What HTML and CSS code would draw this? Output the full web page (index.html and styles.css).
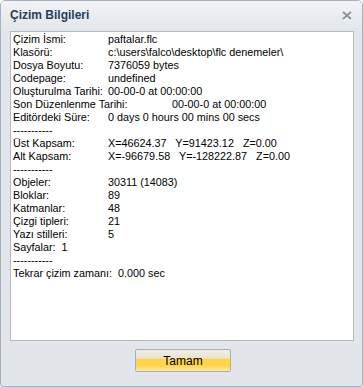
FILE: index.html
```html
<!DOCTYPE html>
<html>
<head>
<meta charset="utf-8">
<link rel="stylesheet" href="styles.css">
</head>
<body>
<div class="window">
  <div class="titlebar">
    <span class="title">Çizim Bilgileri</span>
    <svg class="close" width="11" height="10" viewBox="0 0 11 10">
      <path d="M1 1 L9 8 M9 1 L1 8" stroke="#ffffff" stroke-width="2" transform="translate(0.5,1)" opacity="0.8"/>
      <path d="M1 1 L9 8 M9 1 L1 8" stroke="#8893a1" stroke-width="2"/>
    </svg>
  </div>
  <div class="content">
    <div class="info">
      <div class="row"><span class="k">Çizim İsmi:</span><span class="v">paftalar.flc</span></div>
      <div class="row"><span class="k">Klasörü:</span><span class="v">c:\users\falco\desktop\flc denemeler\</span></div>
      <div class="row"><span class="k">Dosya Boyutu:</span><span class="v">7376059 bytes</span></div>
      <div class="row"><span class="k">Codepage:</span><span class="v">undefined</span></div>
      <div class="row"><span class="k">Oluşturulma Tarihi:</span><span class="v">00-00-0 at 00:00:00</span></div>
      <div class="row wide"><span class="k">Son Düzenlenme Tarihi:</span><span class="v">00-00-0 at 00:00:00</span></div>
      <div class="row"><span class="k">Editördeki Süre:</span><span class="v">0 days 0 hours 00 mins 00 secs</span></div>
      <div class="line">-----------</div>
      <div class="row"><span class="k">Üst Kapsam:</span><span class="v">X=46624.37   Y=91423.12   Z=0.00</span></div>
      <div class="row"><span class="k">Alt Kapsam:</span><span class="v">X=-96679.58   Y=-128222.87   Z=0.00</span></div>
      <div class="line">-----------</div>
      <div class="row"><span class="k">Objeler:</span><span class="v">30311 (14083)</span></div>
      <div class="row"><span class="k">Bloklar:</span><span class="v">89</span></div>
      <div class="row"><span class="k">Katmanlar:</span><span class="v">48</span></div>
      <div class="row"><span class="k">Çizgi tipleri:</span><span class="v">21</span></div>
      <div class="row"><span class="k">Yazı stilleri:</span><span class="v">5</span></div>
      <div class="line">Sayfalar:  1</div>
      <div class="line">-----------</div>
      <div class="line">Tekrar çizim zamanı:  0.000 sec</div>
    </div>
    <div class="actions">
      <button class="btn">Tamam</button>
    </div>
  </div>
</div>
</body>
</html>
```

FILE: styles.css
```css
html, body {
  margin: 0;
  padding: 0;
  background: #ffffff;
}
.window {
  box-sizing: border-box;
  width: 363px;
  height: 387px;
  border: 1px solid #a7b1bd;
  border-radius: 5px 5px 3px 3px;
  background: #e2e5e9;
  display: flex;
  flex-direction: column;
  overflow: hidden;
}
.titlebar {
  height: 29px;
  flex: none;
  display: flex;
  align-items: center;
  justify-content: space-between;
  padding: 0 9px 0 9px;
  background: linear-gradient(#f1f3f6, #e3e6ea);
}
.title {
  font-family: "Liberation Sans", Arial, sans-serif;
  font-weight: bold;
  font-size: 12px;
  color: #253f60;
  margin-top: -1px;
}
.close {
  display: block;
  margin-top: 1px;
}
.content {
  flex: 1;
  display: flex;
  flex-direction: column;
  padding: 1px 8px 13px 9px;
}
.info {
  height: 310px;
  box-sizing: border-box;
  background: #ffffff;
  border: 1px solid #b3bac4;
  padding: 1px 2px;
  font-family: "Liberation Sans", Arial, sans-serif;
  font-size: 10.8px;
  line-height: 13px;
  color: #000000;
}
.row {
  display: grid;
  grid-template-columns: 95px auto;
  white-space: pre;
}
.row.wide {
  grid-template-columns: 159px auto;
}
.line {
  white-space: pre;
}
.actions {
  display: flex;
  justify-content: center;
  padding-top: 8px;
}
.btn {
  width: 96px;
  height: 23px;
  margin-left: 2px;
  border: 1px solid #a9aeb5;
  border-radius: 2px;
  background: linear-gradient(#f0ede3 0%, #ebe4cf 40%, #ffd34f 42%, #ffd54f 75%, #ffe7a2 100%);
  font-family: "Liberation Sans", Arial, sans-serif;
  font-size: 12px;
  color: #000000;
  padding: 0;
}
```
